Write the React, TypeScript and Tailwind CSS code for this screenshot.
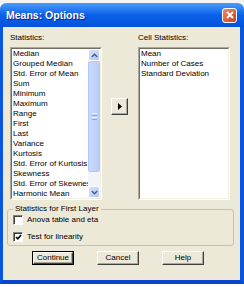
import React from "react";

const statistics = [
    "Median",
    "Grouped Median",
    "Std. Error of Mean",
    "Sum",
    "Minimum",
    "Maximum",
    "Range",
    "First",
    "Last",
    "Variance",
    "Kurtosis",
    "Std. Error of Kurtosis",
    "Skewness",
    "Std. Error of Skewness",
    "Harmonic Mean",
];

const cellStatistics = ["Mean", "Number of Cases", "Standard Deviation"];

function SunkenBox({ children }: { children: React.ReactNode }) {
    return (
        <div className="h-[153px] w-[92px] border border-t-[#ACA899] border-l-[#ACA899] border-b-white border-r-white">
            <div className="flex h-full w-full overflow-hidden border border-t-[#716F64] border-l-[#716F64] border-b-[#F1EFE2] border-r-[#F1EFE2] bg-white">
                {children}
            </div>
        </div>
    );
}

function ScrollArrow({ down }: { down?: boolean }) {
    return (
        <div className="flex h-[12px] w-[12px] items-center justify-center rounded-[2px] border border-white bg-linear-to-br from-[#D6E2FD] to-[#B3C8F6]">
            <svg width="7" height="5" viewBox="0 0 7 5">
                <polyline
                    points={down ? "0.8,1 3.5,3.7 6.2,1" : "0.8,4 3.5,1.3 6.2,4"}
                    fill="none"
                    stroke="#4D6185"
                    strokeWidth="1.6"
                />
            </svg>
        </div>
    );
}

function ScrollBar() {
    return (
        <div className="flex w-[12px] shrink-0 flex-col bg-[#F3F4FA]">
            <ScrollArrow />
            <div className="flex h-[111px] items-center justify-center rounded-[2px] border border-[#B4C8F5] bg-linear-to-r from-[#CAD8FC] to-[#BACDF9]">
                <div className="flex flex-col gap-[1px]">
                    <div className="h-[1px] w-[5px] bg-[#EEF3FE]" />
                    <div className="h-[1px] w-[5px] bg-[#8CA6E6]" />
                    <div className="h-[1px] w-[5px] bg-[#EEF3FE]" />
                    <div className="h-[1px] w-[5px] bg-[#8CA6E6]" />
                </div>
            </div>
            <div className="grow" />
            <ScrollArrow down />
        </div>
    );
}

function CheckBox({ label, checked }: { label: string; checked?: boolean }) {
    return (
        <div className="flex h-[10px] items-center gap-[4px]">
            <div className="flex h-[10px] w-[10px] items-center justify-center border border-t-[#808080] border-l-[#808080] border-b-white border-r-white bg-white shadow-[inset_1px_1px_0_#404040]">
                {checked && (
                    <svg width="7" height="6" viewBox="0 0 7 6">
                        <polyline
                            points="1,3 2.8,4.8 6,1"
                            fill="none"
                            stroke="#000"
                            strokeWidth="1.5"
                        />
                    </svg>
                )}
            </div>
            <span>{label}</span>
        </div>
    );
}

function PushButton({ label, isDefault }: { label: string; isDefault?: boolean }) {
    const face = (
        <div className="flex h-full w-full items-center justify-center border border-t-white border-l-white border-b-[#404040] border-r-[#404040] bg-[#ECE9D8] shadow-[inset_-1px_-1px_0_#ACA899]">
            {label}
        </div>
    );
    if (isDefault) {
        return <button className="h-[14px] w-[42px] border border-black">{face}</button>;
    }
    return <button className="h-[14px] w-[42px]">{face}</button>;
}

export default function App() {
    return (
        <div className="h-[287px] w-[244px] overflow-hidden bg-white font-['Liberation_Sans',Arial,sans-serif] text-[8px] leading-[10px] text-black">
            <div className="h-[3px] bg-[#F4F4F2]" />
            <div className="flex h-[24px] items-center justify-between rounded-t-[6px] bg-linear-to-b from-[#4A9BFA] via-[#0A60EA] to-[#0552DB] pl-[6px] pr-[7px]">
                <span className="text-[10.5px] font-bold text-white [text-shadow:1px_1px_0_#0A2A8A]">
                    Means: Options
                </span>
                <div className="flex h-[15px] w-[15px] items-center justify-center rounded-[3px] border border-white bg-linear-to-br from-[#EC8A63] to-[#C9401A]">
                    <svg width="8" height="8" viewBox="0 0 8 8">
                        <path d="M1 1 L7 7 M7 1 L1 7" stroke="#fff" strokeWidth="1.8" />
                    </svg>
                </div>
            </div>
            <div className="h-[257px] border-b-[4px] border-l-[3px] border-r-[4px] border-[#0A55DF] border-b-[#0B45CC] bg-[#ECE9D8] pt-[6px]">
                <div className="ml-[7px] flex">
                    <div className="flex flex-col gap-[4px]">
                        <span>Statistics:</span>
                        <SunkenBox>
                            <div className="grow overflow-hidden whitespace-nowrap pl-[1px]">
                                {statistics.map((s) => (
                                    <div key={s}>{s}</div>
                                ))}
                            </div>
                            <ScrollBar />
                        </SunkenBox>
                    </div>
                    <div className="w-[36px] pl-[9px] pt-[65px]">
                        <button className="h-[17px] w-[17px] border border-t-white border-l-white border-b-[#404040] border-r-[#404040] bg-[#ECE9D8] shadow-[inset_-1px_-1px_0_#ACA899]">
                            <svg width="15" height="15" viewBox="0 0 15 15">
                                <polygon points="6,4 10,7.5 6,11" fill="#000" />
                            </svg>
                        </button>
                    </div>
                    <div className="flex flex-col gap-[4px]">
                        <span>Cell Statistics:</span>
                        <SunkenBox>
                            <div className="grow overflow-hidden whitespace-nowrap pl-[1px]">
                                {cellStatistics.map((s) => (
                                    <div key={s}>{s}</div>
                                ))}
                            </div>
                        </SunkenBox>
                    </div>
                </div>
                <fieldset className="ml-[4px] mt-[4px] w-[227px] rounded-[3px] border border-[#C5C2B2] pb-[3px] pl-[5px]">
                    <legend className="px-[2px]">Statistics for First Layer</legend>
                    <div className="mt-[1px] flex flex-col gap-[7px]">
                        <CheckBox label="Anova table and eta" />
                        <CheckBox label="Test for linearity" checked />
                    </div>
                </fieldset>
                <div className="mt-[5px] flex gap-[23px] pl-[29px]">
                    <PushButton label="Continue" isDefault />
                    <PushButton label="Cancel" />
                    <PushButton label="Help" />
                </div>
            </div>
        </div>
    );
}
